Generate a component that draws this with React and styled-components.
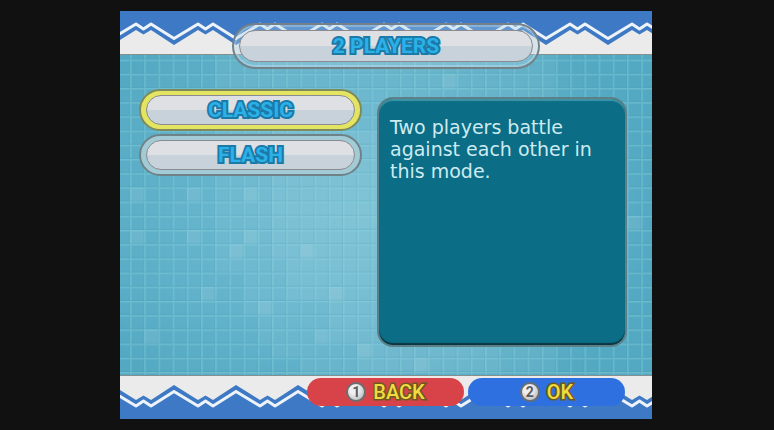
import { useState } from "react";
import styled, { createGlobalStyle } from "styled-components";

const GlobalStyle = createGlobalStyle`
  * {
    box-sizing: border-box;
  }
  body {
    margin: 0;
    background: #111111;
  }
  button {
    margin: 0;
    padding: 0;
    border: 0;
    cursor: pointer;
    font-family: Roboto, "Liberation Sans", sans-serif;
  }
`;

const modes = [
  {
    name: "CLASSIC",
    description: "Two players battle against each other in this mode.",
  },
  {
    name: "FLASH",
    description: "Two players race to clear the flashing blocks.",
  },
];

// [column, row] of the tiles that are lit up
const litTiles = [
  [0, 12], [4, 12], [8, 12], [0, 15], [4, 15], [8, 15], [7, 16], [12, 16],
  [5, 19], [14, 19], [9, 20], [1, 22], [13, 22], [16, 23], [20, 24],
  [22, 4], [35, 14],
];

const TILE = 14.2;

const Wallpaper = () => (
  <WallpaperSvg aria-hidden="true">
    <defs>
      <radialGradient id="glow" cx="45%" cy="50%" r="56%">
        <stop offset="0" stopColor="#74bed2" />
        <stop offset="0.5" stopColor="#66b5cd" />
        <stop offset="1" stopColor="#54a9c2" />
      </radialGradient>
      <pattern
        id="tiles"
        x="10"
        y="6"
        width={TILE}
        height={TILE}
        patternUnits="userSpaceOnUse"
      >
        <path d="M0 0.8H14.2M0.8 0V14.2" stroke="#8ed8e2" strokeOpacity="0.38" strokeWidth="1.4" />
        <path d="M0 13.6H14.2M13.6 0V14.2" stroke="#3f93ab" strokeOpacity="0.18" strokeWidth="1" />
      </pattern>
    </defs>
    <rect width="100%" height="100%" fill="url(#glow)" />
    <g transform="translate(10 6) scale(14.2)" fill="#ffffff">
      <path
        d="M6 0H30V25H12V24H10V23H9V21H8V18H6Z"
        fillOpacity="0.05"
      />
      <path d="M10 8H26V25H16V23H14V20H11V17H10Z" fillOpacity="0.05" />
      {litTiles.map(([col, row]) => (
        <rect
          key={`${col}-${row}`}
          x={col}
          y={row}
          width="1"
          height="1"
          fillOpacity="0.09"
        />
      ))}
    </g>
    <rect width="100%" height="100%" fill="url(#tiles)" />
  </WallpaperSvg>
);

const ZigzagBand = ({ id, flipped }) => (
  <BandSvg $flipped={flipped} aria-hidden="true">
    <defs>
      <pattern
        id={id}
        x="-8"
        width="62"
        height="45"
        patternUnits="userSpaceOnUse"
      >
        <rect width="62" height="45" fill="#3d79c4" />
        <path
          d="M-1 34.5L0 34L24 19L31.5 23.5L39 19L62 34L63 33.5V45H-1Z"
          fill="#ebebeb"
        />
        <path
          d="M-3 25.5L0 27.5L24 13L31.5 18L39 13L62 27.5L65 25.5"
          fill="none"
          stroke="#eef3fa"
          strokeWidth="3"
          strokeLinejoin="round"
        />
      </pattern>
    </defs>
    <rect width="100%" height="44" fill={`url(#${id})`} />
    <rect y="43" width="100%" height="1" fill="#84908e" />
  </BandSvg>
);

const App = () => {
  const [selected, setSelected] = useState(0);

  return (
    <Page>
      <GlobalStyle />
      <Stage>
        <Wallpaper />
        <TopBand>
          <ZigzagBand id="zigzag-top" />
        </TopBand>
        <TitlePill>
          <PillFace $tall>
            <Title>2 PLAYERS</Title>
          </PillFace>
        </TitlePill>
        <Main>
          <Menu>
            {modes.map((mode, index) => (
              <ModeButton
                key={mode.name}
                type="button"
                $active={index === selected}
                aria-pressed={index === selected}
                onClick={() => setSelected(index)}
              >
                <PillFace>
                  <Label>{mode.name}</Label>
                </PillFace>
              </ModeButton>
            ))}
          </Menu>
          <Panel>
            <Description>{modes[selected].description}</Description>
          </Panel>
        </Main>
        <BottomBand>
          <ZigzagBand id="zigzag-bottom" flipped />
        </BottomBand>
        <Footer>
          <ActionButton type="button" $color="#d8434a">
            <Key>1</Key>
            <ActionLabel>BACK</ActionLabel>
          </ActionButton>
          <ActionButton type="button" $color="#2f70e0">
            <Key>2</Key>
            <ActionLabel>OK</ActionLabel>
          </ActionButton>
        </Footer>
      </Stage>
    </Page>
  );
};

export default App;

const Page = styled.div`
  display: grid;
  min-height: 100vh;
  padding: 11px 122px 11px 120px;
  background: #111111;
`;

const Stage = styled.div`
  display: grid;
  grid-template-columns: minmax(0, 1fr);
  grid-template-rows: 44px 1fr 44px;
  overflow: hidden;
`;

const WallpaperSvg = styled.svg`
  grid-area: 1 / 1 / -1 / -1;
  width: 100%;
  height: 100%;
  min-height: 0;
  contain: size;
`;

const BandSvg = styled.svg`
  display: block;
  width: 100%;
  height: 44px;
  transform: ${(props) => (props.$flipped ? "scaleY(-1)" : "none")};
`;

const TopBand = styled.div`
  grid-area: 1 / 1;
`;

const BottomBand = styled.div`
  grid-area: 3 / 1;
`;

const TitlePill = styled.header`
  grid-area: 1 / 1 / 3 / 2;
  align-self: start;
  justify-self: center;
  width: 58%;
  margin-top: 12px;
  padding: 5px;
  border: 2px solid #73828a;
  border-radius: 24px;
  background: rgba(170, 210, 230, 0.35);
  box-shadow: inset 0 0 0 2px rgba(225, 240, 245, 0.3);
`;

const PillFace = styled.span`
  display: flex;
  align-items: center;
  justify-content: center;
  height: ${(props) => (props.$tall ? "32px" : "30px")};
  border: 1px solid #8b8a90;
  border-radius: 16px;
  background: linear-gradient(#dfe0e3 50%, #c8d2db 50%);
`;

const Label = styled.span`
  color: #2cb0e8;
  font-family: Roboto, "Liberation Sans", sans-serif;
  font-size: 21px;
  font-weight: 700;
  line-height: 24px;
  -webkit-text-stroke: 4px #1a7aa8;
  paint-order: stroke fill;
`;

const Title = styled(Label).attrs({ as: "h1" })`
  margin: 0;
`;

const Main = styled.main`
  grid-area: 2 / 1;
  display: grid;
  grid-template-columns: minmax(0, 223fr) minmax(0, 250fr);
  gap: 15px;
  padding: 34px 25px 28px 19px;
`;

const Menu = styled.nav`
  display: flex;
  flex-direction: column;
  gap: 3px;
`;

const ModeButton = styled.button`
  padding: 4px 5px;
  border: 2px solid ${(props) => (props.$active ? "#7f8a5c" : "#6f8288")};
  border-radius: 21px;
  background: ${(props) => (props.$active ? "#e3e562" : "#a3cbd6")};
`;

const Panel = styled.section`
  margin-top: 8px;
  padding: 17px 11px;
  border: 2px solid #5d7f87;
  border-radius: 16px;
  background: #0b6d86;
  box-shadow:
    inset 0 -2px 1px #0a3742,
    inset 0 2px 1px #3d95a6;
`;

const Description = styled.p`
  margin: 0;
  color: #cdebf0;
  font-family: "DejaVu Sans", sans-serif;
  font-size: 19px;
  line-height: 22px;
`;

const Footer = styled.footer`
  grid-area: 3 / 1;
  z-index: 1;
  display: flex;
  justify-content: flex-end;
  align-items: flex-start;
  gap: 4px;
  padding: 3px 27px;
`;

const ActionButton = styled.button`
  display: flex;
  align-items: center;
  justify-content: center;
  gap: 7px;
  width: 157px;
  height: 28px;
  border-radius: 14px;
  background: ${(props) => props.$color};
`;

const Key = styled.span`
  width: 20px;
  height: 20px;
  border: 2px solid #6b6e70;
  border-radius: 50%;
  background: radial-gradient(circle at 40% 35%, #f0f0f0 30%, #a9abad);
  color: #5b5d60;
  font-size: 14px;
  font-weight: 700;
  line-height: 16px;
  text-align: center;
`;

const ActionLabel = styled.span`
  color: #f0dc40;
  font-size: 20px;
  font-weight: 500;
  line-height: 24px;
  -webkit-text-stroke: 3px #6e5a1c;
  paint-order: stroke fill;
`;
